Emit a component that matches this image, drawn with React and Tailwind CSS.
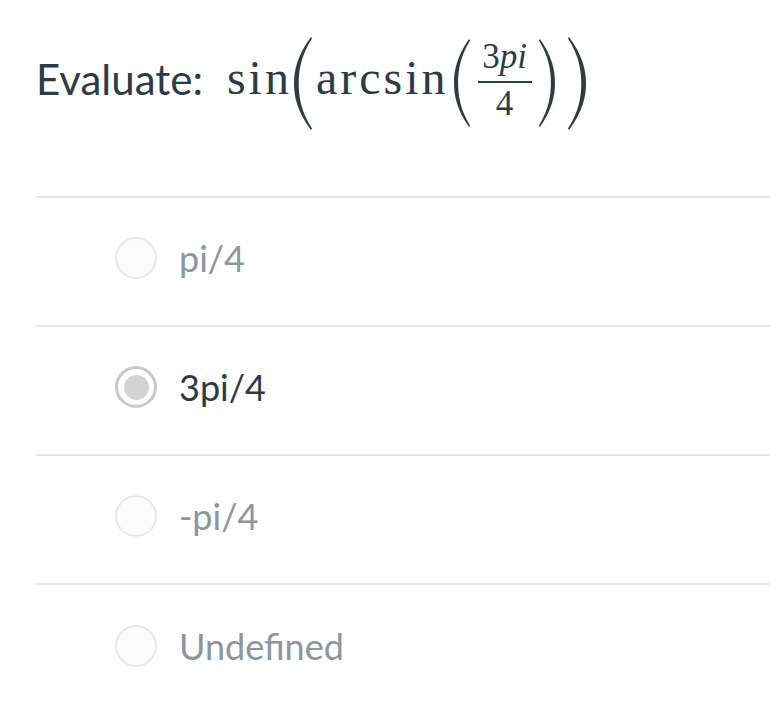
import React from "react";

function Paren({ w, h, right }) {
  const m = h / 2;
  const d = `M${w - 1},0 C${w * 0.22},${h * 0.2} 1,${h * 0.36} 1,${m} C1,${h * 0.64} ${w * 0.22},${h * 0.8} ${w - 1},${h} L${w},${h - 1.5} C${w * 0.42},${h * 0.8} ${w * 0.3},${h * 0.64} ${w * 0.3},${m} C${w * 0.3},${h * 0.36} ${w * 0.42},${h * 0.2} ${w},1.5 Z`;
  return (
    <svg width={w} height={h} viewBox={`0 0 ${w} ${h}`} className="block shrink-0">
      <path d={d} fill="#2d3b45" transform={right ? `translate(${w},0) scale(-1,1)` : undefined} />
    </svg>
  );
}

function Radio({ selected }) {
  if (selected) {
    return (
      <div className="w-[42px] h-[42px] rounded-full border-[3px] border-[#c9c9c9] bg-white flex items-center justify-center shrink-0">
        <div className="w-[25px] h-[25px] rounded-full bg-[#d3d3d3]" />
      </div>
    );
  }
  return <div className="w-[42px] h-[42px] rounded-full border-2 border-[#e8e8e8] bg-[#fcfcfc] shrink-0" />;
}

const options = [
  { label: "pi/4", selected: false },
  { label: "3pi/4", selected: true },
  { label: "-pi/4", selected: false },
  { label: "Undefined", selected: false },
];

export default function App() {
  return (
    <div className="w-[770px] h-[723px] overflow-hidden bg-white pl-[36px] font-['Lato',sans-serif]">
      <div className="h-[198px] border-b-2 border-[#e6e6e6] flex items-start text-[#2d3b45]">
        <span className="mt-[58px] text-[42px] leading-[42px]">Evaluate:</span>
        <span className="ml-[24px] mt-[54px] font-['Liberation_Serif',serif] text-[48px] leading-[48px] tracking-[3px]">sin</span>
        <div className="ml-[1px] mt-[37px]">
          <Paren w={19} h={93} />
        </div>
        <span className="ml-[4px] mt-[54px] font-['Liberation_Serif',serif] text-[48px] leading-[48px] tracking-[3px]">arcsin</span>
        <div className="ml-[4px] mt-[39px]">
          <Paren w={17} h={88} />
        </div>
        <div className="ml-[8px] mt-[40px] w-[54px] flex flex-col items-center font-['Liberation_Serif',serif] text-[35px] leading-[34px]">
          <span>
            3<span className="italic">pi</span>
          </span>
          <div className="mt-[7px] h-[2px] w-full bg-[#2d3b45]" />
          <span className="mt-[4px]">4</span>
        </div>
        <div className="ml-[7px] mt-[39px]">
          <Paren w={17} h={88} right />
        </div>
        <div className="ml-[12px] mt-[37px]">
          <Paren w={19} h={93} right />
        </div>
      </div>
      {options.map((o, i) => (
        <div
          key={o.label}
          className={
            i < options.length - 1
              ? "h-[129px] border-b-2 border-[#e6e6e6] flex items-center pl-[79px] gap-[22px] pb-[7px]"
              : "h-[129px] flex items-center pl-[79px] gap-[22px] pb-[7px]"
          }
        >
          <Radio selected={o.selected} />
          <span
            className={
              o.selected
                ? "text-[36px] leading-none text-[#2d3b45]"
                : "text-[36px] leading-none text-[#8b969e]"
            }
          >
            {o.label}
          </span>
        </div>
      ))}
    </div>
  );
}
